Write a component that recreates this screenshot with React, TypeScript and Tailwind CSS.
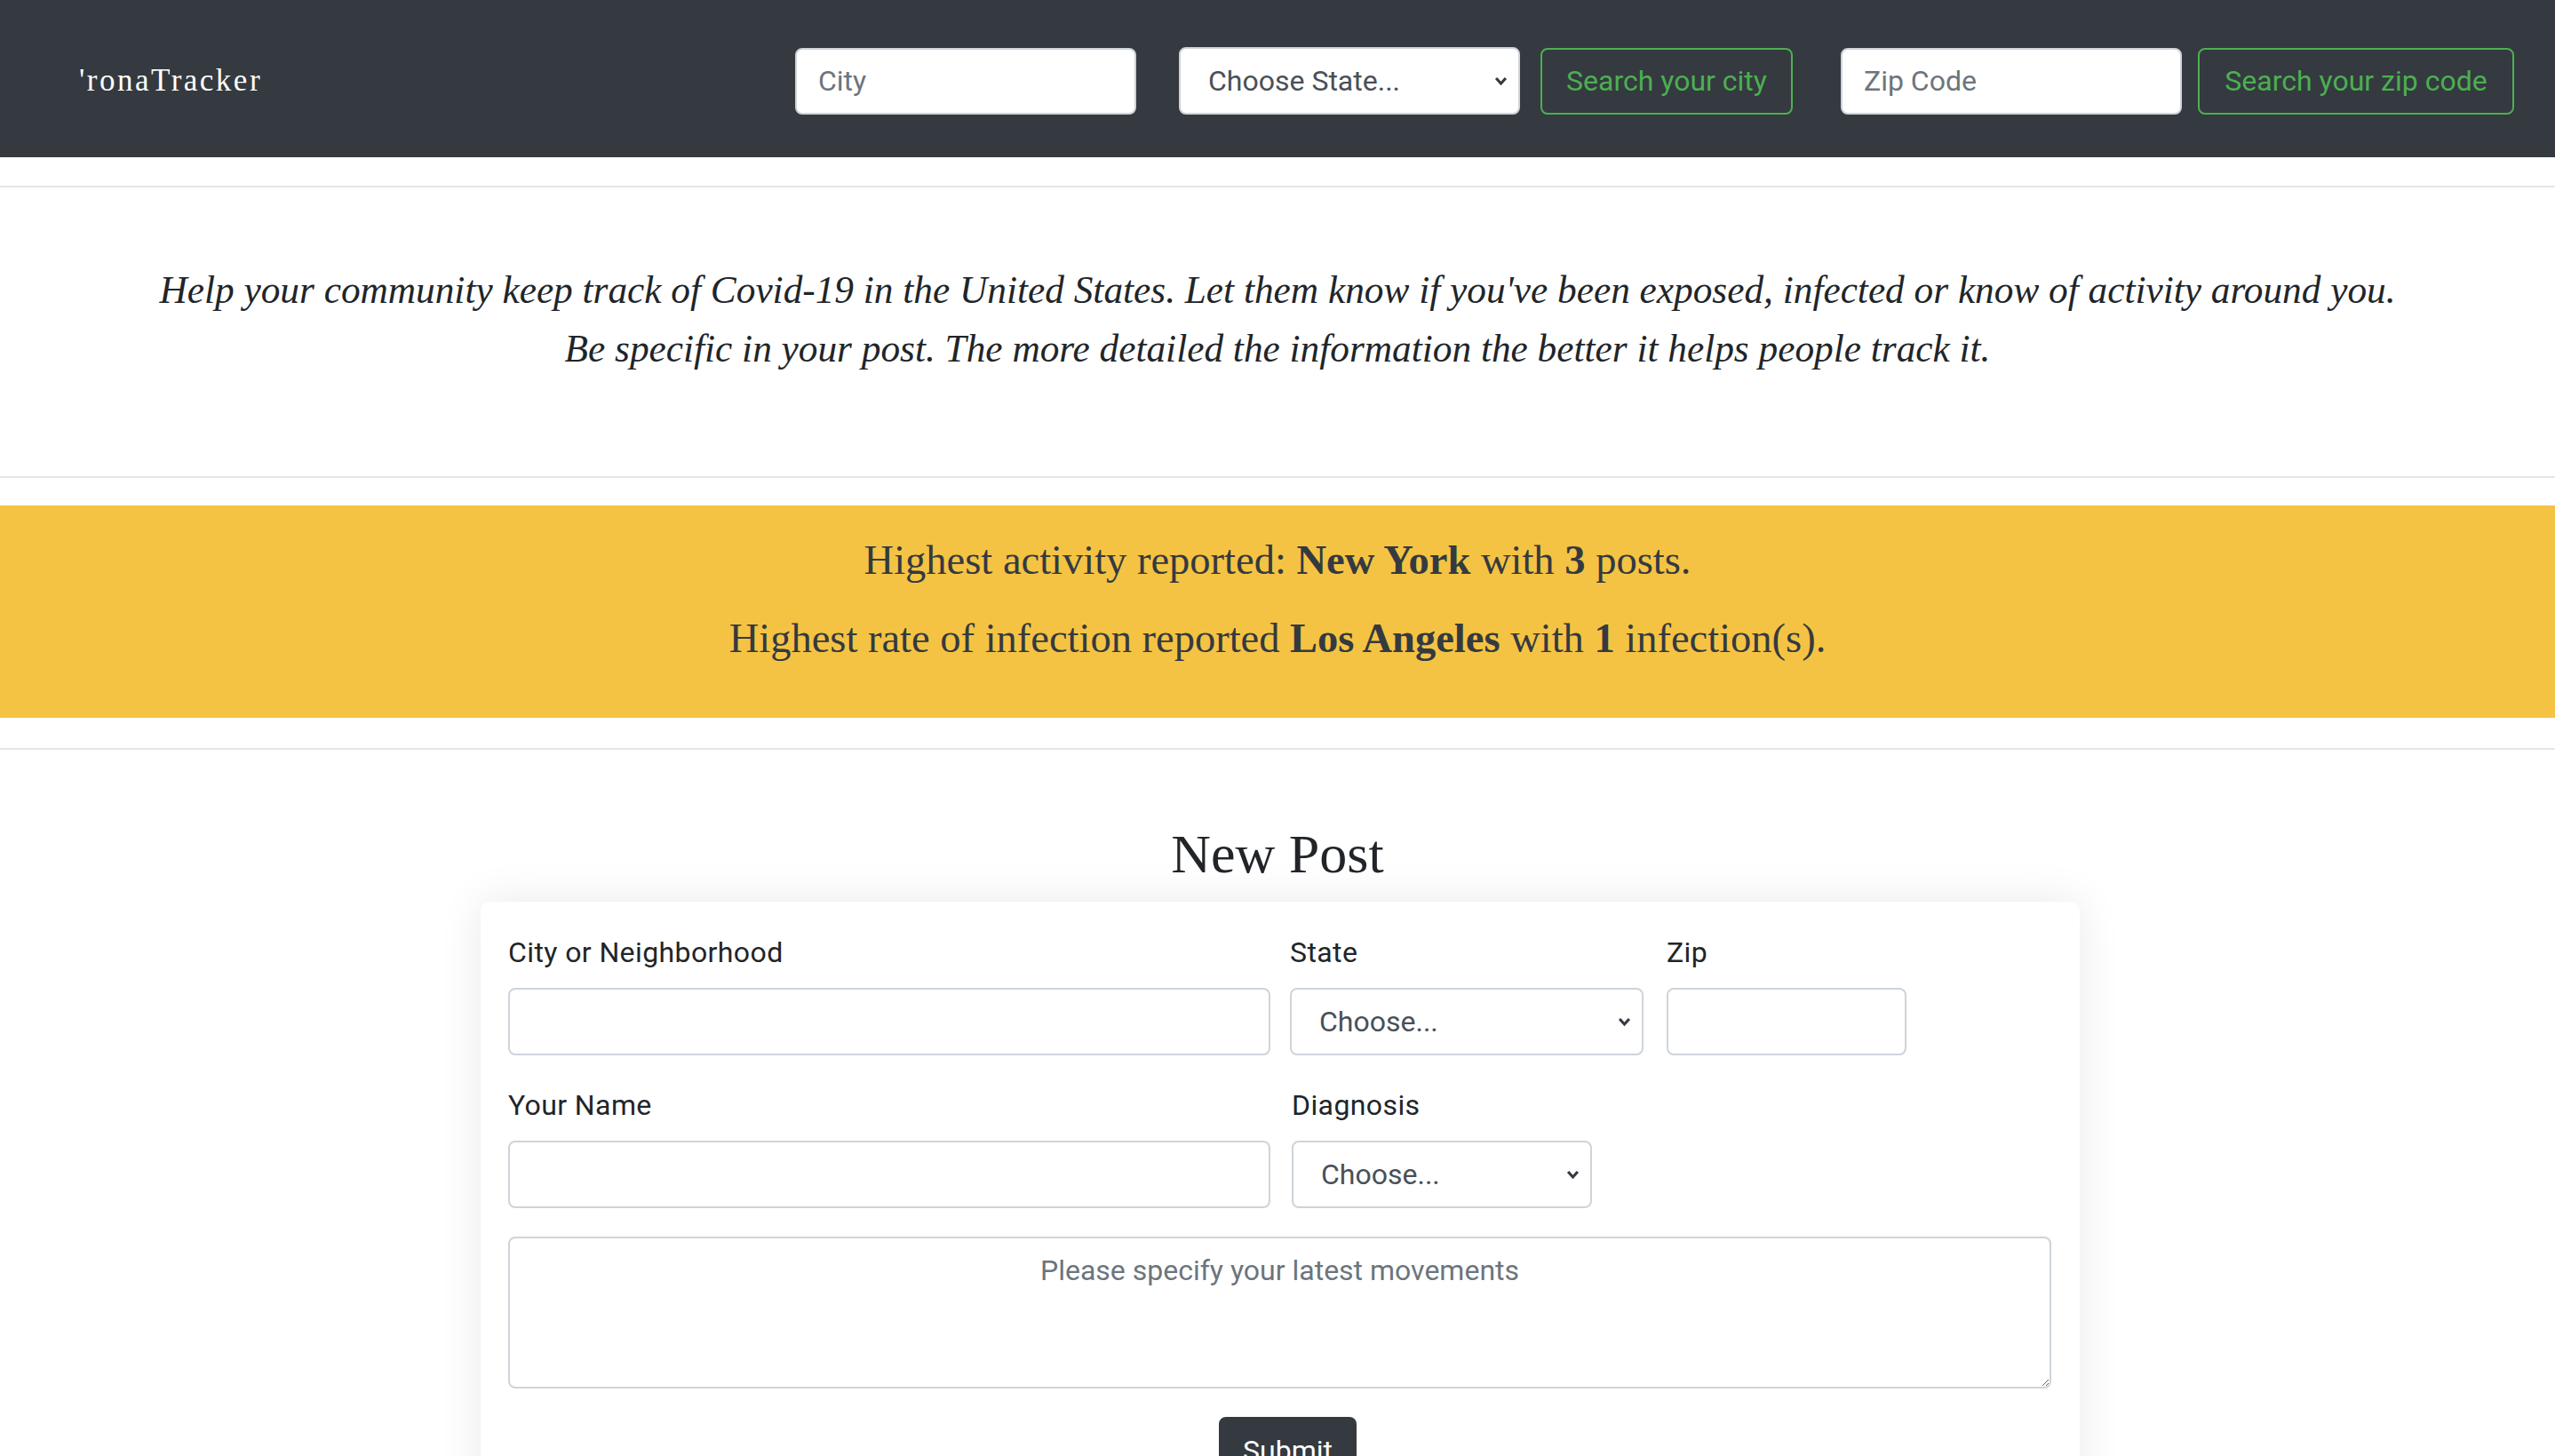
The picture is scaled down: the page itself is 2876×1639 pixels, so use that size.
const sans = "font-['Roboto',_'Liberation_Sans',_sans-serif]";
const serif = "font-['Liberation_Serif',_serif]";

function Chevron({ className = "" }: { className?: string }) {
  return (
    <svg
      viewBox="0 0 12 10"
      className={`pointer-events-none absolute top-1/2 -translate-y-1/2 w-[15px] h-[12px] ${className}`}
    >
      <path d="M1.5 2.5 L6 7.5 L10.5 2.5" fill="none" stroke="#343a40" strokeWidth="2.6" />
    </svg>
  );
}

function Select({ label, width }: { label: string; width: string }) {
  return (
    <div className={`relative ${width} h-[76px]`}>
      <select
        defaultValue=""
        className={`${sans} appearance-none w-full h-full bg-white border-2 border-[#ced4da] rounded-[8px] pl-[31px] pr-[40px] text-[32px] text-[#495057] outline-none`}
      >
        <option value="">{label}</option>
      </select>
      <Chevron className="right-[14px]" />
    </div>
  );
}

function Navbar() {
  return (
    <nav className="h-[177px] bg-[#343a40] flex items-start pt-[53px] pl-[89px] pr-[46px]">
      <span className={`${serif} text-white text-[35px] leading-[75px] tracking-[2.5px]`}>'ronaTracker</span>
      <div className="ml-auto flex items-center">
        <input
          placeholder="City"
          className={`${sans} w-[384px] h-[75px] bg-white border-2 border-[#ced4da] rounded-[8px] px-[24px] text-[32px] placeholder:text-[#6c757d] outline-none`}
        />
        <div className="ml-[48px]">
          <Select label="Choose State..." width="w-[384px]" />
        </div>
        <button
          className={`${sans} ml-[23px] w-[284px] h-[75px] border-2 border-[#4caf50] rounded-[8px] text-[#4caf50] text-[32px]`}
        >
          Search your city
        </button>
        <input
          placeholder="Zip Code"
          className={`${sans} ml-[54px] w-[384px] h-[75px] bg-white border-2 border-[#ced4da] rounded-[8px] px-[24px] text-[32px] placeholder:text-[#6c757d] outline-none`}
        />
        <button
          className={`${sans} ml-[18px] w-[356px] h-[75px] border-2 border-[#4caf50] rounded-[8px] text-[#4caf50] text-[32px]`}
        >
          Search your zip code
        </button>
      </div>
    </nav>
  );
}

function Field({ label, children }: { label: string; children: React.ReactNode }) {
  return (
    <div className="flex flex-col">
      <label className={`${sans} text-[32px] leading-[48px] tracking-[0.4px] text-[#212529] mb-[16px]`}>{label}</label>
      {children}
    </div>
  );
}

const inputCls = `${sans} h-[76px] bg-white border-2 border-[#ced4da] rounded-[8px] px-[24px] text-[32px] outline-none`;

export default function App() {
  return (
    <div className="min-h-screen bg-white overflow-hidden">
      <Navbar />
      <div className="h-[2px] bg-[#e6e6e6] mt-[32px]" />
      <div className={`${serif} italic text-center text-[#212529] text-[43.3px] leading-[66px] pt-[82px] pb-[111px]`}>
        <p>Help your community keep track of Covid-19 in the United States. Let them know if you've been exposed, infected or know of activity around you.</p>
        <p>Be specific in your post. The more detailed the information the better it helps people track it.</p>
      </div>
      <div className="h-[2px] bg-[#e6e6e6]" />
      <div
        className={`${serif} mt-[31px] bg-[#f5c343] text-[#343a40] text-center text-[46.5px] leading-[66px] pt-[29px] pb-[56px] flex flex-col gap-[22px]`}
      >
        <p>
          Highest activity reported: <b>New York</b> with <b>3</b> posts.
        </p>
        <p>
          Highest rate of infection reported <b>Los Angeles</b> with <b>1</b> infection(s).
        </p>
      </div>
      <div className="h-[2px] bg-[#e6e6e6] mt-[34px]" />
      <h2 className={`${serif} text-center text-[#212529] text-[62px] leading-[72px] mt-[81px] mb-[18px]`}>New Post</h2>
      <div className="ml-[541px] w-[1800px] bg-white rounded-[10px] shadow-[0_0_50px_rgba(0,0,0,0.09)] pl-[31px] pr-[32px] pt-[33px] pb-[40px]">
        <div className="flex items-start">
          <div className="w-[858px]">
            <Field label="City or Neighborhood">
              <input className={inputCls} />
            </Field>
          </div>
          <div className="ml-[22px] w-[398px]">
            <Field label="State">
              <Select label="Choose..." width="w-[398px]" />
            </Field>
          </div>
          <div className="ml-[26px] w-[270px]">
            <Field label="Zip">
              <input className={inputCls} />
            </Field>
          </div>
        </div>
        <div className="flex items-start mt-[32px]">
          <div className="w-[858px]">
            <Field label="Your Name">
              <input className={inputCls} />
            </Field>
          </div>
          <div className="ml-[24px] w-[338px]">
            <Field label="Diagnosis">
              <Select label="Choose..." width="w-[338px]" />
            </Field>
          </div>
        </div>
        <textarea
          placeholder="Please specify your latest movements"
          className={`${sans} mt-[32px] block w-full h-[171px] border-2 border-[#ced4da] rounded-[8px] px-[24px] py-[12px] text-[32px] leading-[48px] text-center placeholder:text-[#6c757d] outline-none`}
        />
        <div className="flex justify-center mt-[32px] pl-[18px]">
          <button className={`${sans} w-[155px] h-[76px] bg-[#343a40] text-white rounded-[8px] text-[32px]`}>Submit</button>
        </div>
      </div>
    </div>
  );
}
